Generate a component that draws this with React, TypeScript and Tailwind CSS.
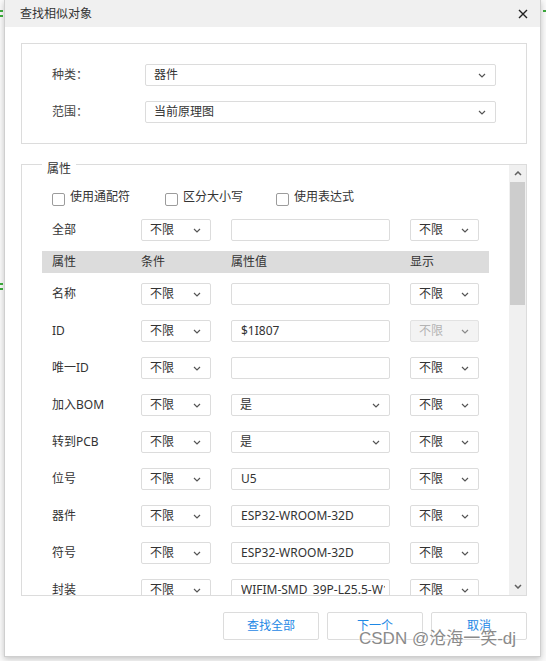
import type { ReactNode } from "react";

const font = { fontFamily: '"Noto Sans", "Noto Sans CJK SC", sans-serif' };

type Row = {
  label: string;
  value: string;
  kind?: "input" | "select";
  showDisabled?: boolean;
};

const rows: Row[] = [
  { label: "名称", value: "" },
  { label: "ID", value: "$1I807", showDisabled: true },
  { label: "唯一ID", value: "" },
  { label: "加入BOM", value: "是", kind: "select" },
  { label: "转到PCB", value: "是", kind: "select" },
  { label: "位号", value: "U5" },
  { label: "器件", value: "ESP32-WROOM-32D" },
  { label: "符号", value: "ESP32-WROOM-32D" },
  { label: "封装", value: "WIFIM-SMD_39P-L25.5-W18.0-P1.27" },
];

function Chevron({ color = "#555" }: { color?: string }) {
  return (
    <svg width="8" height="5" viewBox="0 0 8 5" className="shrink-0">
      <polyline points="1,1 4,4 7,1" fill="none" stroke={color} strokeWidth="1.2" />
    </svg>
  );
}

function Select({
  text,
  className,
  disabled,
}: {
  text: string;
  className: string;
  disabled?: boolean;
}) {
  return (
    <div
      className={
        "flex h-[22px] items-center justify-between rounded-[2px] border pl-[8px] pr-[9px] " +
        (disabled
          ? "border-[#e2e2e2] bg-[#f3f3f3] text-[#b4b4b4] "
          : "border-[#dcdcdc] bg-white text-[#333] ") +
        className
      }
    >
      <span className="whitespace-nowrap">{text}</span>
      <Chevron color={disabled ? "#8a8a8a" : "#555"} />
    </div>
  );
}

function Input({ text }: { text: string }) {
  return (
    <div className="ml-[20px] flex h-[22px] w-[159px] items-center rounded-[2px] border border-[#dcdcdc] bg-white pl-[9px] pr-[4px] text-[#333]">
      <div className="flex-1 overflow-hidden whitespace-nowrap">{text}</div>
    </div>
  );
}

function Checkbox({ label, className }: { label: string; className?: string }) {
  return (
    <div className={"flex items-center " + (className ?? "")}>
      <span className="mt-[4px] h-[13px] w-[13px] rounded-[2px] border border-[#9c9c9c] bg-white" />
      <span className="ml-[5px] text-[#333]">{label}</span>
    </div>
  );
}

function Button({ children }: { children: ReactNode }) {
  return (
    <div className="flex h-[28px] w-[96px] items-center justify-center rounded-[2px] border border-[#dcdcdc] bg-white text-[#1e88e5]">
      {children}
    </div>
  );
}

export default function App() {
  return (
    <div
      className="relative h-[661px] w-[546px] overflow-hidden bg-[#fafafa] text-[12px]"
      style={font}
    >
      <div className="absolute left-0 top-[10px] h-[2px] w-[3px] bg-[#3aa53a]" />
      <div className="absolute left-0 top-[15px] h-[2px] w-[3px] bg-[#3aa53a]" />
      <div className="absolute left-0 top-[283px] h-[2px] w-[3px] bg-[#3aa53a]" />
      <div className="absolute left-0 top-[288px] h-[2px] w-[3px] bg-[#3aa53a]" />
      <div className="absolute right-0 top-[10px] h-[2px] w-[3px] bg-[#3aa53a]" />

      <div className="pl-[4px]">
        <div className="flex h-[657px] w-[537px] flex-col border-x border-b border-[#cfcfcf] bg-white shadow-[0_2px_6px_rgba(0,0,0,0.22)]">
          {/* title bar */}
          <div className="flex h-[27px] shrink-0 items-center justify-between bg-[#f0f0f0] pl-[15px] pr-[12px] text-[#333]">
            <span>查找相似对象</span>
            <svg width="10" height="10" viewBox="0 0 10 10">
              <path d="M1 1 L9 9 M9 1 L1 9" stroke="#222" strokeWidth="1.4" />
            </svg>
          </div>

          <div className="flex flex-1 flex-col pl-[16px] pr-[13px]">
            {/* type / scope */}
            <div className="mt-[16px] flex h-[101px] flex-col gap-[15px] border border-[#dcdcdc] px-[30px] py-[20px]">
              <div className="flex items-center">
                <span className="w-[93px] text-[#444]">种类：</span>
                <Select text="器件" className="flex-1" />
              </div>
              <div className="flex items-center">
                <span className="w-[93px] text-[#444]">范围：</span>
                <Select text="当前原理图" className="flex-1" />
              </div>
            </div>

            {/* properties */}
            <div className="relative mt-[20px] flex h-[432px] border border-[#dcdcdc]">
              <span className="absolute left-[20px] top-[-3px] z-10 bg-white px-[5px] leading-[14px] text-[#333]">
                属性
              </span>
              <div className="flex-1 overflow-hidden pl-[20px]">
                <div className="mt-[22px] flex h-[20px] items-center pl-[10px]">
                  <Checkbox label="使用通配符" />
                  <Checkbox label="区分大小写" className="ml-[35px]" />
                  <Checkbox label="使用表达式" className="ml-[33px]" />
                </div>

                <div className="mt-[12px] flex h-[22px] items-center pl-[10px]">
                  <span className="w-[89px] text-[#333]">全部</span>
                  <Select text="不限" className="w-[70px]" />
                  <Input text="" />
                  <Select text="不限" className="ml-[20px] w-[69px]" />
                </div>

                <div className="mt-[10px] flex h-[22px] w-[447px] items-center bg-[#dcdcdc] pl-[10px] text-[#333]">
                  <span className="w-[89px]">属性</span>
                  <span className="w-[90px]">条件</span>
                  <span className="w-[179px]">属性值</span>
                  <span>显示</span>
                </div>

                <div className="mt-[10px] flex flex-col gap-[15px]">
                  {rows.map((r) => (
                    <div key={r.label} className="flex h-[22px] shrink-0 items-center pl-[10px]">
                      <span className="w-[89px] text-[#333]">{r.label}</span>
                      <Select text="不限" className="w-[70px]" />
                      {r.kind === "select" ? (
                        <Select text={r.value} className="ml-[20px] w-[159px] pr-[8px]" />
                      ) : (
                        <Input text={r.value} />
                      )}
                      <Select text="不限" className="ml-[20px] w-[69px]" disabled={r.showDisabled} />
                    </div>
                  ))}
                </div>
              </div>

              {/* scrollbar */}
              <div className="flex w-[17px] flex-col bg-[#f0f0f0]">
                <div className="flex h-[17px] items-center justify-center">
                  <svg width="8" height="5" viewBox="0 0 8 5">
                    <polyline points="1,4 4,1 7,4" fill="none" stroke="#606060" strokeWidth="1.5" />
                  </svg>
                </div>
                <div className="mx-[1px] h-[123px] bg-[#cdcdcd]" />
                <div className="flex-1" />
                <div className="flex h-[17px] items-center justify-center">
                  <svg width="8" height="5" viewBox="0 0 8 5">
                    <polyline points="1,1 4,4 7,1" fill="none" stroke="#606060" strokeWidth="1.5" />
                  </svg>
                </div>
              </div>
            </div>

            {/* buttons */}
            <div className="mt-[16px] flex justify-end gap-[8px]">
              <Button>查找全部</Button>
              <Button>下一个</Button>
              <Button>取消</Button>
            </div>
          </div>
        </div>
      </div>

      <div
        className="absolute left-[359px] top-[628px] whitespace-nowrap text-[17px] leading-[22px] text-[#8a8a8a] [text-shadow:0_0_2px_#fff,0_0_2px_#fff]"
        style={{ fontFamily: '"Liberation Sans", "Noto Sans CJK SC", sans-serif' }}
      >
        CSDN @沧海一笑-dj
      </div>
    </div>
  );
}
